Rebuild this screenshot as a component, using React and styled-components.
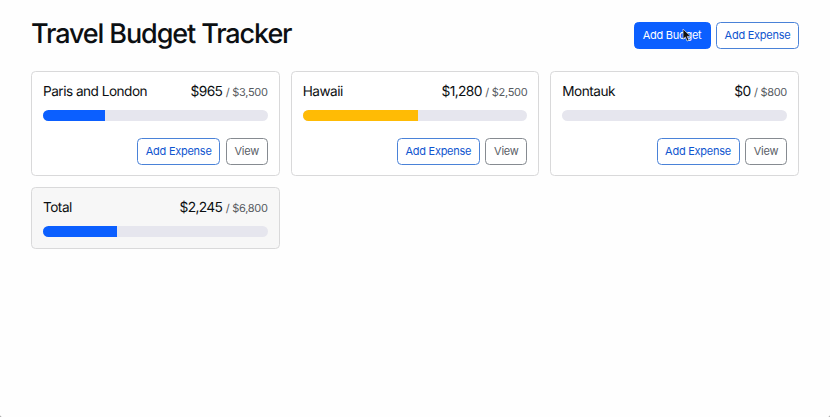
import React from "react";
import styled, { createGlobalStyle } from "styled-components";

const GlobalStyle = createGlobalStyle`
  *, *::before, *::after { box-sizing: border-box; }
  body {
    margin: 0;
    background: #8c8c8c;
    font-family: Inter, "Liberation Sans", sans-serif;
    text-rendering: geometricPrecision;
    color: #0c0f12;
  }
`;

const Page = styled.main`
  height: 100vh;
  padding: 22px 31px 0;
  background: #fefefe;
  border-radius: 0 0 2px 2px;
  overflow: hidden;
`;

const Header = styled.header`
  display: flex;
  align-items: flex-start;
  gap: 5.5px;
  height: 49px;
`;

const Title = styled.h1`
  margin: -5px auto 0 0;
  font-size: 27px;
  font-weight: 500;
  line-height: 33px;
  letter-spacing: -1.12px;
  white-space: nowrap;
`;

const variants = {
  primary: "color: #fff; background: #0b5fff; border-color: #0b5fff;",
  outline: "color: #0f55cf; background: #fff; border-color: #4a82d8;",
  secondary: "color: #5a6067; background: #fff; border-color: #868b91;",
};

const Button = styled.button`
  flex: none;
  width: ${({ $width }) => $width}px;
  height: 27px;
  padding: 0 0 1px;
  border: 1px solid;
  border-radius: 4.5px;
  font: 420 11px/23px Inter, sans-serif;
  letter-spacing: -0.26px;
  white-space: nowrap;
  ${({ $variant }) => variants[$variant]}
`;

const PrimaryAction = styled.div`
  position: relative;
  display: flex;
`;

const Cursor = styled.svg`
  position: absolute;
  left: 48px;
  top: 6px;
  width: 10px;
  height: 15px;
`;

const Grid = styled.section`
  display: grid;
  grid-template-columns: repeat(3, 1fr);
  gap: 11px;
  align-items: start;
`;

const Card = styled.article`
  height: ${({ $total }) => ($total ? 62 : 105)}px;
  padding: 10px 11px;
  border: 1px solid #d9d9da;
  border-radius: 4.5px;
  background: ${({ $total }) => ($total ? "#f7f7f7" : "#fff")};
`;

const CardHeading = styled.div`
  display: flex;
  justify-content: space-between;
  align-items: baseline;
  height: 20px;
  line-height: 21px;
`;

const Name = styled.h2`
  margin: 0;
  font-size: 13.6px;
  font-weight: 400;
  letter-spacing: -0.5px;
`;

const Amount = styled.div`
  font-size: 13.8px;
  letter-spacing: -0.65px;
`;

const Limit = styled.span`
  margin-left: 3.5px;
  font-size: 11px;
  letter-spacing: -0.3px;
  color: #55595e;
`;

const Track = styled.div`
  height: 11px;
  margin-top: 8px;
  border-radius: 6px;
  background: #e6e6ee;
  overflow: hidden;
`;

const Fill = styled.div`
  height: 100%;
  background: ${({ $color }) => $color};
`;

const Actions = styled.div`
  display: flex;
  justify-content: flex-end;
  gap: 5.5px;
  margin-top: 17px;
`;

const budgets = [
  { name: "Paris and London", spent: 965, max: 3500, color: "#0b5fff" },
  { name: "Hawaii", spent: 1280, max: 2500, color: "#ffbb05" },
  { name: "Montauk", spent: 0, max: 800, color: "#0b5fff" },
  { name: "Total", spent: 2245, max: 6800, color: "#0b5fff", total: true },
];

const money = (value) => `$${value.toLocaleString("en-US")}`;

function BudgetCard({ name, spent, max, color, total }) {
  return (
    <Card $total={total}>
      <CardHeading>
        <Name>{name}</Name>
        <Amount>
          {money(spent)}
          <Limit>/ {money(max)}</Limit>
        </Amount>
      </CardHeading>
      <Track>
        <Fill $color={color} style={{ width: `${(spent / max) * 100}%` }} />
      </Track>
      {!total && (
        <Actions>
          <Button $variant="outline" $width={83}>Add Expense</Button>
          <Button $variant="secondary" $width={42}>View</Button>
        </Actions>
      )}
    </Card>
  );
}

export default function App() {
  return (
    <>
      <GlobalStyle />
      <Page>
        <Header>
          <Title>Travel Budget Tracker</Title>
          <PrimaryAction>
            <Button $variant="primary" $width={77}>Add Budget</Button>
            <Cursor viewBox="0 0 10 15" aria-hidden="true">
              <path
                d="M1 1v10.3l2.4-2.2 1.7 4 1.9-.8-1.7-3.9h3.5z"
                fill="#111"
                stroke="#d5e1f7"
                strokeWidth=".7"
              />
            </Cursor>
          </PrimaryAction>
          <Button $variant="outline" $width={83}>Add Expense</Button>
        </Header>
        <Grid>
          {budgets.map((budget) => (
            <BudgetCard key={budget.name} {...budget} />
          ))}
        </Grid>
      </Page>
    </>
  );
}
